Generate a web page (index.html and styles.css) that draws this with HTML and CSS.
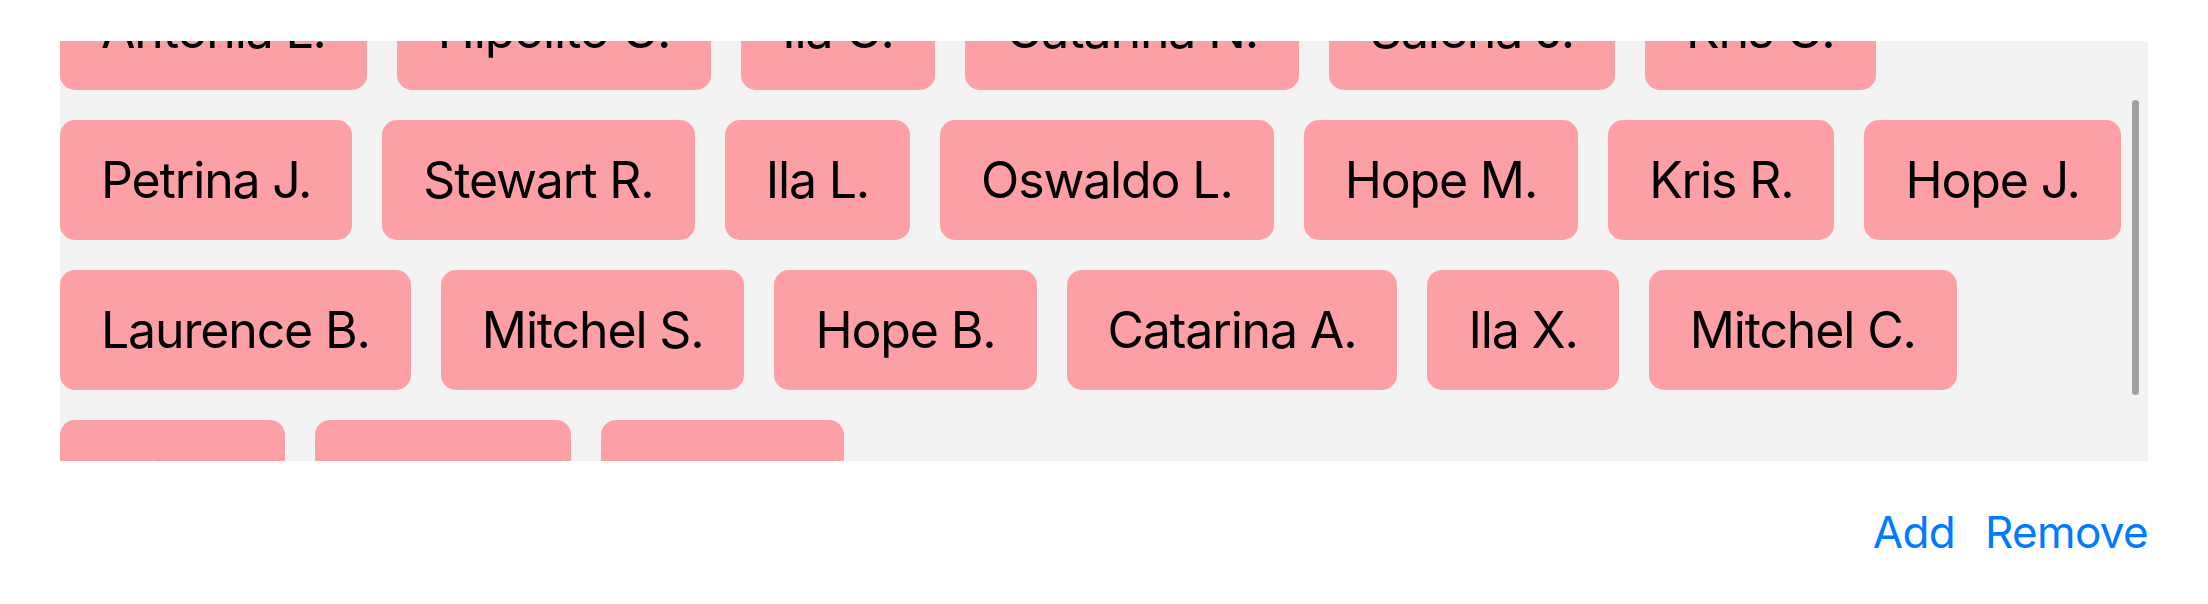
FILE: index.html
```html
<!DOCTYPE html>
<html lang="en">
<head>
<meta charset="utf-8">
<title>Tags</title>
<link rel="stylesheet" href="styles.css">
</head>
<body>
<div class="screen">
  <div class="panel">
    <div class="tags">
      <div class="tag">Antonia L.</div>
      <div class="tag">Hipolito C.</div>
      <div class="tag">Ila C.</div>
      <div class="tag">Catarina N.</div>
      <div class="tag">Salena J.</div>
      <div class="tag">Kris C.</div>
      <div class="tag">Petrina J.</div>
      <div class="tag">Stewart R.</div>
      <div class="tag">Ila L.</div>
      <div class="tag">Oswaldo L.</div>
      <div class="tag">Hope M.</div>
      <div class="tag">Kris R.</div>
      <div class="tag">Hope J.</div>
      <div class="tag">Laurence B.</div>
      <div class="tag">Mitchel S.</div>
      <div class="tag">Hope B.</div>
      <div class="tag">Catarina A.</div>
      <div class="tag">Ila X.</div>
      <div class="tag">Mitchel C.</div>
      <div class="tag">Kris T.</div>
      <div class="tag">Hope J.</div>
      <div class="tag">Hope I.</div>
    </div>
    <div class="scrollbar"></div>
  </div>
  <div class="actions">
    <button class="action">Add</button>
    <button class="action">Remove</button>
  </div>
</div>
</body>
</html>
```

FILE: styles.css
```css
html, body {
  margin: 0;
  padding: 0;
  background: #ffffff;
}

.screen {
  width: 2208px;
  height: 604px;
  padding: 41px 60px 0;
  box-sizing: border-box;
  font-family: Inter, "Liberation Sans", sans-serif;
}

.panel {
  position: relative;
  height: 420px;
  background: #f3f3f3;
  overflow: hidden;
}

.tags {
  display: flex;
  flex-wrap: wrap;
  gap: 30px;
  margin-top: -71px;
}

.tag {
  height: 120px;
  padding: 0 41px;
  box-sizing: border-box;
  display: flex;
  align-items: center;
  background: #fda0a6;
  border-radius: 15px;
  color: #000000;
  font-size: 50px;
  letter-spacing: -0.023em;
  white-space: nowrap;
}

.scrollbar {
  position: absolute;
  top: 59px;
  right: 9px;
  width: 7px;
  height: 295px;
  border-radius: 4px;
  background: #a1a1a1;
}

.actions {
  display: flex;
  justify-content: flex-end;
  gap: 30px;
  margin-top: 44px;
}

.action {
  border: 0;
  padding: 0;
  background: none;
  color: #007aff;
  font-family: inherit;
  font-size: 44px;
  letter-spacing: -0.015em;
  line-height: 54px;
}
```
